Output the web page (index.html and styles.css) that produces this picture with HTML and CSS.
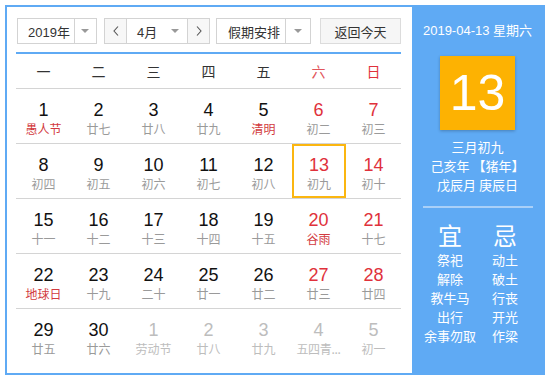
FILE: index.html
```html
<!DOCTYPE html>
<html lang="zh-CN">
<head>
    <meta charset="UTF-8">
    <title>万年历</title>
    <link rel="stylesheet" href="styles.css">
</head>
<body>
<div class="calendar">
    <div class="main">
        <div class="toolbar">
            <div class="select year">
                <span class="select-text">2019年</span>
                <span class="select-arrow"><i class="caret"></i></span>
            </div>
            <div class="month-group">
                <span class="nav-btn"><svg width="6" height="10" viewBox="0 0 6 10"><polyline points="5,0.5 1,5 5,9.5" fill="none" stroke="#555" stroke-width="1.1"/></svg></span>
                <span class="month-select">4月<i class="caret"></i></span>
                <span class="nav-btn next"><svg width="6" height="10" viewBox="0 0 6 10"><polyline points="1,0.5 5,5 1,9.5" fill="none" stroke="#555" stroke-width="1.1"/></svg></span>
            </div>
            <div class="select holiday">
                <span class="select-text">假期安排</span>
                <span class="select-arrow"><i class="caret"></i></span>
            </div>
            <button class="today-btn">返回今天</button>
        </div>

        <div class="week-head">
            <span>一</span><span>二</span><span>三</span><span>四</span><span>五</span><span class="sat">六</span><span class="sun">日</span>
        </div>

        <div class="days">
            <div class="row">
                <div class="day"><b>1</b><em class="fest">愚人节</em></div>
                <div class="day"><b>2</b><em>廿七</em></div>
                <div class="day"><b>3</b><em>廿八</em></div>
                <div class="day"><b>4</b><em>廿九</em></div>
                <div class="day"><b>5</b><em class="fest">清明</em></div>
                <div class="day weekend"><b>6</b><em>初二</em></div>
                <div class="day weekend"><b>7</b><em>初三</em></div>
            </div>
            <div class="row">
                <div class="day"><b>8</b><em>初四</em></div>
                <div class="day"><b>9</b><em>初五</em></div>
                <div class="day"><b>10</b><em>初六</em></div>
                <div class="day"><b>11</b><em>初七</em></div>
                <div class="day"><b>12</b><em>初八</em></div>
                <div class="day weekend today"><b>13</b><em>初九</em></div>
                <div class="day weekend"><b>14</b><em>初十</em></div>
            </div>
            <div class="row">
                <div class="day"><b>15</b><em>十一</em></div>
                <div class="day"><b>16</b><em>十二</em></div>
                <div class="day"><b>17</b><em>十三</em></div>
                <div class="day"><b>18</b><em>十四</em></div>
                <div class="day"><b>19</b><em>十五</em></div>
                <div class="day weekend"><b>20</b><em class="fest">谷雨</em></div>
                <div class="day weekend"><b>21</b><em>十七</em></div>
            </div>
            <div class="row">
                <div class="day"><b>22</b><em class="fest">地球日</em></div>
                <div class="day"><b>23</b><em>十九</em></div>
                <div class="day"><b>24</b><em>二十</em></div>
                <div class="day"><b>25</b><em>廿一</em></div>
                <div class="day"><b>26</b><em>廿二</em></div>
                <div class="day weekend"><b>27</b><em>廿三</em></div>
                <div class="day weekend"><b>28</b><em>廿四</em></div>
            </div>
            <div class="row">
                <div class="day"><b>29</b><em>廿五</em></div>
                <div class="day"><b>30</b><em>廿六</em></div>
                <div class="day other"><b>1</b><em>劳动节</em></div>
                <div class="day other"><b>2</b><em>廿八</em></div>
                <div class="day other"><b>3</b><em>廿九</em></div>
                <div class="day other"><b>4</b><em class="short">五四青...</em></div>
                <div class="day other"><b>5</b><em>初一</em></div>
            </div>
        </div>
    </div>

    <div class="side">
        <div class="side-date">2019-04-13 星期六</div>
        <div class="big-day">13</div>
        <div class="lunar">
            <p>三月初九</p>
            <p>己亥年 【猪年】</p>
            <p>戊辰月 庚辰日</p>
        </div>
        <div class="divider"></div>
        <div class="advice">
            <div class="col">
                <h2>宜</h2>
                <p>祭祀</p>
                <p>解除</p>
                <p>教牛马</p>
                <p>出行</p>
                <p>余事勿取</p>
            </div>
            <div class="col">
                <h2>忌</h2>
                <p>动土</p>
                <p>破土</p>
                <p>行丧</p>
                <p>开光</p>
                <p>作梁</p>
            </div>
        </div>
    </div>
</div>
</body>
</html>
```

FILE: styles.css
```css
:root {
    --blue: #5faaf4;
    --line: #d4d4d4;
    --red: #e0313b;
    --gray: #9a9a9a;
}
body {
    margin: 0;
    font-family: "Liberation Sans", "Noto Sans CJK SC", sans-serif;
    color: #333;
    background: #fff;
}
.calendar {
    display: flex;
    width: 540px;
    height: 370px;
    margin: 5px 0 0 5px;
    border: 2px solid var(--blue);
    box-sizing: border-box;
}
.main {
    width: 405px;
    padding: 11px 11px 0 9px;
    box-sizing: border-box;
}

/* 顶部控件 */
.toolbar {
    display: flex;
    height: 26px;
    padding-left: 1px;
    font-size: 13px;
}
.select {
    display: flex;
    border: 1px solid #d3d3d3;
    box-sizing: border-box;
    background: #fff;
}
.select-text {
    display: flex;
    align-items: center;
    padding-left: 10px;
    color: #333;
}
.select-arrow {
    display: flex;
    align-items: center;
    justify-content: center;
    width: 25px;
    border-left: 1px solid #d3d3d3;
}
.caret {
    display: inline-block;
    width: 0;
    height: 0;
    border-left: 4px solid transparent;
    border-right: 4px solid transparent;
    border-top: 4px solid #999;
}
.year {
    width: 80px;
}
.year .select-text {
    width: 54px;
}
.month-group {
    display: flex;
    width: 106px;
    margin-left: 7px;
    border: 1px solid #d3d3d3;
    box-sizing: border-box;
}
.nav-btn {
    display: flex;
    align-items: center;
    justify-content: center;
    width: 21px;
    background: #f7f7f7;
    border-right: 1px solid #d3d3d3;
}
.nav-btn.next {
    border-right: none;
    border-left: 1px solid #d3d3d3;
}
.month-select {
    display: flex;
    align-items: center;
    justify-content: space-between;
    flex: 1;
    padding: 0 8px 0 10px;
}
.holiday {
    width: 95px;
    margin-left: 6px;
}
.holiday .select-text {
    width: 70px;
    padding-left: 11px;
    box-sizing: border-box;
}
.today-btn {
    width: 81px;
    height: 26px;
    margin-left: 9px;
    padding: 0;
    font-family: inherit;
    font-size: 13px;
    color: #333;
    background: #f6f6f6;
    border: 1px solid #dcdcdc;
}

/* 星期 */
.week-head {
    display: grid;
    grid-template-columns: repeat(7, 55px);
    height: 34px;
    margin-top: 8px;
    border-top: 2px solid var(--blue);
    border-bottom: 1px solid var(--line);
    font-size: 14px;
    font-family: "Noto Sans CJK SC", sans-serif;
}
.week-head span {
    display: flex;
    align-items: center;
    justify-content: center;
}
.week-head .sat {
    color: #e2555b;
}
.week-head .sun {
    color: var(--red);
}

/* 日期 */
.row {
    display: grid;
    grid-template-columns: repeat(7, 55px);
    border-bottom: 1px solid var(--line);
}
.row:last-child {
    border-bottom: none;
}
.day {
    display: flex;
    flex-direction: column;
    align-items: center;
    height: 54px;
    padding-top: 11px;
    box-sizing: border-box;
}
.day b {
    font-weight: normal;
    font-size: 18px;
    line-height: 20px;
    color: #111;
}
.day em {
    font-style: normal;
    font-size: 12px;
    line-height: 18px;
    color: var(--gray);
    font-family: "Noto Sans CJK SC", sans-serif;
    white-space: nowrap;
}
.day em.fest {
    color: #d23a40;
}
.day em.short {
    letter-spacing: -0.3px;
}
.day.weekend b {
    color: var(--red);
}
.day.other b,
.day.other em {
    color: #bdbdbd;
}
.day.today {
    box-shadow: inset 0 0 0 2px #fbb610;
    margin-left: 1px;
    width: 54px;
}

/* 右侧详情 */
.side {
    flex: 1;
    display: flex;
    flex-direction: column;
    align-items: center;
    background: var(--blue);
    color: #fff;
    font-family: "Noto Sans CJK SC", sans-serif;
    padding-top: 15px;
}
.side-date {
    font-size: 13px;
    line-height: 18px;
    font-family: "Liberation Sans", "Noto Sans CJK SC", sans-serif;
}
.big-day {
    display: flex;
    align-items: center;
    justify-content: center;
    width: 75px;
    height: 74px;
    margin-top: 16px;
    background: #fdb202;
    box-shadow: 0 1px 3px rgba(0, 0, 0, 0.25);
    font-family: "Liberation Sans", sans-serif;
    font-size: 50px;
}
.lunar {
    margin-top: 7px;
    text-align: center;
    font-size: 13px;
    line-height: 19px;
}
.lunar p {
    margin: 0;
}
.divider {
    width: 110px;
    height: 2px;
    margin-top: 12px;
    background: #a9d0f8;
}
.advice {
    display: flex;
    margin-top: 12px;
}
.col {
    width: 55px;
    text-align: center;
}
.col h2 {
    margin: 0;
    font-size: 24px;
    line-height: 30px;
    font-weight: normal;
}
.col p {
    margin: 0;
    font-size: 13px;
    line-height: 19px;
}
```
